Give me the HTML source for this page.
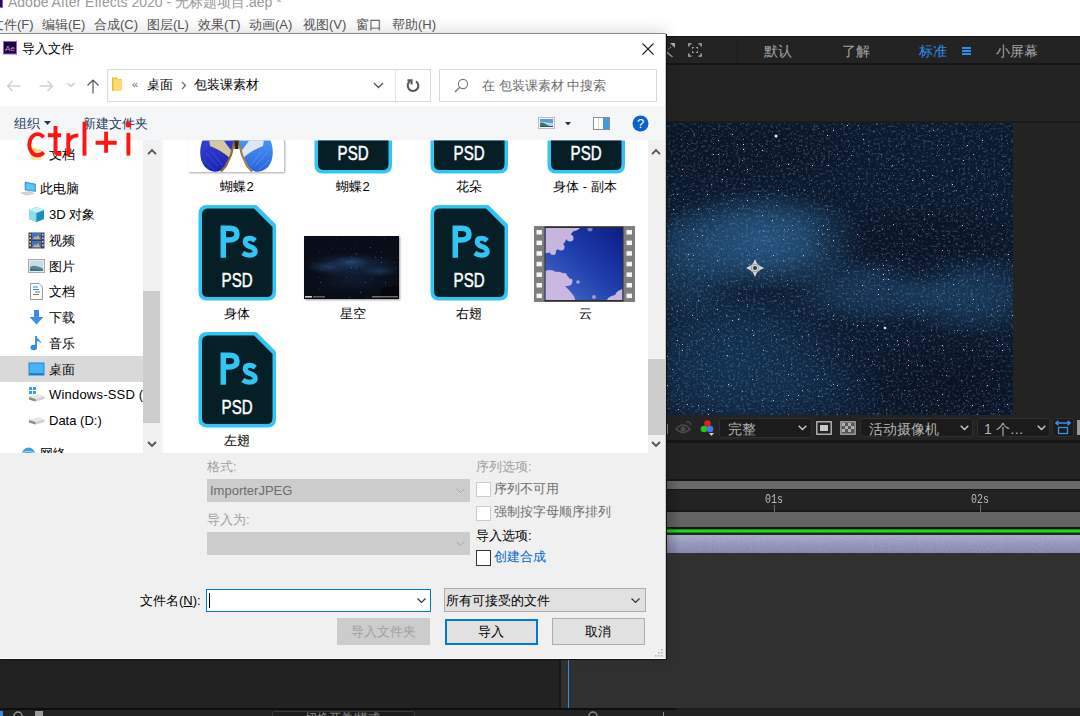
<!DOCTYPE html>
<html><head><meta charset="utf-8">
<style>
*{margin:0;padding:0;box-sizing:border-box}
html,body{width:1080px;height:716px;overflow:hidden;background:#fff;font-family:"Liberation Sans",sans-serif}
.a{position:absolute}
.t{position:absolute;white-space:nowrap;line-height:1}
</style></head><body>
<!-- ===== AE window background ===== -->
<div class="a" style="left:0;top:0;width:1080px;height:36px;background:#fff"></div>
<div class="a" style="left:0;top:0;width:3px;height:8px;background:#2a0a50;border-right:1px solid #8a5ad8;border-bottom:1px solid #8a5ad8"></div>
<div class="t" style="left:8px;top:-5px;font-size:14px;color:#9a9a9a">Adobe After Effects 2020 - 无标题项目.aep *</div>
<div class="t" style="left:-9px;top:18px;font-size:13px;color:#555;word-spacing:0">文件(F)</div>
<div class="t" style="left:42px;top:18px;font-size:13px;color:#555">编辑(E)</div>
<div class="t" style="left:94px;top:18px;font-size:13px;color:#555">合成(C)</div>
<div class="t" style="left:147px;top:18px;font-size:13px;color:#555">图层(L)</div>
<div class="t" style="left:198px;top:18px;font-size:13px;color:#555">效果(T)</div>
<div class="t" style="left:249px;top:18px;font-size:13px;color:#555">动画(A)</div>
<div class="t" style="left:303px;top:18px;font-size:13px;color:#555">视图(V)</div>
<div class="t" style="left:356px;top:18px;font-size:13px;color:#555">窗口</div>
<div class="t" style="left:392px;top:18px;font-size:13px;color:#555">帮助(H)</div>

<!-- AE dark area right -->
<div class="a" style="left:600px;top:36px;width:480px;height:680px;background:#232323"></div>
<!-- toolbar -->
<div class="a" style="left:600px;top:63px;width:480px;height:2px;background:#151515"></div>
<div class="a" style="left:600px;top:36px;width:480px;height:1px;background:#161616"></div>
<div class="a" style="left:737px;top:36px;width:1px;height:27px;background:#1b1b1b"></div>
<div class="t" style="left:764px;top:44px;font-size:14px;color:#a3a3a3">默认</div>
<div class="t" style="left:842px;top:44px;font-size:14px;color:#a3a3a3">了解</div>
<div class="t" style="left:918.5px;top:44px;font-size:14px;color:#2f8ee8">标准</div>
<div class="t" style="left:996px;top:44px;font-size:14px;color:#a3a3a3">小屏幕</div>
<div class="a" style="left:962px;top:47px;width:9px;height:1.6px;background:#2f8ee8;box-shadow:0 3px 0 #2f8ee8,0 6px 0 #2f8ee8"></div>
<div class="a" style="left:600px;top:121px;width:480px;height:2px;background:#1a1a1a"></div>

<!-- starfield placeholder -->
<!--STARS--><svg class="a" style="left:666px;top:123px" width="347" height="292" viewBox="0 0 347 292">
<defs>

<filter id="st" x="0" y="0" width="100%" height="100%">
 <feTurbulence type="fractalNoise" baseFrequency="0.8" numOctaves="1" seed="3"/>
 <feColorMatrix type="matrix" values="0 0 0 0 0.55  0 0 0 0 0.62  0 0 0 0 0.9  13 0 0 0 -9.3"/><feGaussianBlur stdDeviation="0.45"/>
</filter>
<filter id="st2" x="0" y="0" width="100%" height="100%">
 <feTurbulence type="fractalNoise" baseFrequency="0.4" numOctaves="2" seed="11"/>
 <feColorMatrix type="matrix" values="0 0 0 0 0.2  0 0 0 0 0.36  0 0 0 0 0.56  3.6 0 0 0 -1.85"/>
</filter>
</defs>
<rect width="347" height="292" fill="#0c1a2e"/>
<defs><radialGradient id="rg0"><stop offset="0" stop-color="#2b6292" stop-opacity="0.8"/><stop offset=".45" stop-color="#2b6292" stop-opacity="0.60"/><stop offset="1" stop-color="#2b6292" stop-opacity="0"/></radialGradient><radialGradient id="rg1"><stop offset="0" stop-color="#1f4c74" stop-opacity="0.6"/><stop offset=".45" stop-color="#1f4c74" stop-opacity="0.45"/><stop offset="1" stop-color="#1f4c74" stop-opacity="0"/></radialGradient><radialGradient id="rg2"><stop offset="0" stop-color="#22507c" stop-opacity="0.5"/><stop offset=".45" stop-color="#22507c" stop-opacity="0.38"/><stop offset="1" stop-color="#22507c" stop-opacity="0"/></radialGradient><radialGradient id="rg3"><stop offset="0" stop-color="#22507c" stop-opacity="0.55"/><stop offset=".45" stop-color="#22507c" stop-opacity="0.41"/><stop offset="1" stop-color="#22507c" stop-opacity="0"/></radialGradient><radialGradient id="rg4"><stop offset="0" stop-color="#17416a" stop-opacity="0.6"/><stop offset=".45" stop-color="#17416a" stop-opacity="0.45"/><stop offset="1" stop-color="#17416a" stop-opacity="0"/></radialGradient><radialGradient id="rg5"><stop offset="0" stop-color="#133456" stop-opacity="0.35"/><stop offset=".45" stop-color="#133456" stop-opacity="0.26"/><stop offset="1" stop-color="#133456" stop-opacity="0"/></radialGradient><radialGradient id="rg6"><stop offset="0" stop-color="#070f1c" stop-opacity="0.6"/><stop offset=".45" stop-color="#070f1c" stop-opacity="0.45"/><stop offset="1" stop-color="#070f1c" stop-opacity="0"/></radialGradient><radialGradient id="rg7"><stop offset="0" stop-color="#08121f" stop-opacity="0.5"/><stop offset=".45" stop-color="#08121f" stop-opacity="0.38"/><stop offset="1" stop-color="#08121f" stop-opacity="0"/></radialGradient><radialGradient id="rg8"><stop offset="0" stop-color="#070e1a" stop-opacity="0.6"/><stop offset=".45" stop-color="#070e1a" stop-opacity="0.45"/><stop offset="1" stop-color="#070e1a" stop-opacity="0"/></radialGradient><radialGradient id="rg9"><stop offset="0" stop-color="#08111e" stop-opacity="0.45"/><stop offset=".45" stop-color="#08111e" stop-opacity="0.34"/><stop offset="1" stop-color="#08111e" stop-opacity="0"/></radialGradient></defs><g><ellipse cx="96" cy="118" rx="105" ry="52" fill="url(#rg0)"/><ellipse cx="20" cy="140" rx="65" ry="58" fill="url(#rg1)"/><ellipse cx="205" cy="168" rx="90" ry="36" fill="url(#rg2)"/><ellipse cx="305" cy="172" rx="80" ry="42" fill="url(#rg3)"/><ellipse cx="70" cy="240" rx="120" ry="85" fill="url(#rg4)"/><ellipse cx="150" cy="270" rx="70" ry="40" fill="url(#rg5)"/><ellipse cx="255" cy="115" rx="120" ry="36" fill="url(#rg6)"/><ellipse cx="60" cy="25" rx="160" ry="50" fill="url(#rg7)"/><ellipse cx="290" cy="260" rx="110" ry="55" fill="url(#rg8)"/><ellipse cx="255" cy="150" rx="45" ry="14" fill="url(#rg9)"/></g>
<rect width="347" height="292" filter="url(#st2)" opacity=".3"/>
<rect width="347" height="292" filter="url(#st)"/>
<circle cx="110" cy="13" r="1.5" fill="#e8ecff"/><circle cx="219" cy="205" r="1.3" fill="#e0e8ff"/>
</svg><!--/STARS-->

<!-- viewer toolbar -->
<div class="a" style="left:600px;top:440px;width:480px;height:3px;background:#161616"></div>

<!-- timeline -->
<div class="a" style="left:600px;top:479px;width:480px;height:2px;background:#171717"></div>
<div class="a" style="left:600px;top:481px;width:480px;height:8px;background:#6a6a6a"></div>
<div class="a" style="left:600px;top:489px;width:480px;height:1px;background:#171717"></div>
<div class="a" style="left:600px;top:510px;width:480px;height:2px;background:#171717"></div>
<div class="a" style="left:600px;top:512px;width:480px;height:16px;background:#636363"></div>
<div class="a" style="left:600px;top:527px;width:480px;height:2px;background:#171717"></div>
<div class="a" style="left:600px;top:529px;width:480px;height:4px;background:linear-gradient(#0b6a0b,#1ed81e 30%,#1ed81e 70%,#0a5a0a)"></div>
<div class="a" style="left:600px;top:533px;width:480px;height:2px;background:#262626"></div>
<div class="a" style="left:600px;top:535px;width:480px;height:18px;background:linear-gradient(#a9a9cb,#9595bb 50%,#8686ac)"></div>
<svg class="a" style="left:666px;top:535px" width="414" height="18" viewBox="0 0 414 18"><defs><filter id="lvn" x="0" y="0" width="100%" height="100%"><feTurbulence type="fractalNoise" baseFrequency="0.9" numOctaves="1" seed="5"/><feColorMatrix type="matrix" values="0 0 0 0 1  0 0 0 0 1  0 0 0 0 1  0 0 0 1.2 -0.55"/></filter></defs><rect width="414" height="18" filter="url(#lvn)" opacity=".35"/></svg>
<div class="a" style="left:666px;top:481px;width:14px;height:72px;background:linear-gradient(90deg,rgba(0,0,0,.18),rgba(0,0,0,0))"></div>
<div class="a" style="left:561px;top:553px;width:519px;height:155px;background:#303030"></div>

<!-- below dialog -->
<div class="a" style="left:0;top:640px;width:559px;height:68px;background:#222"></div>
<div class="a" style="left:559px;top:640px;width:2px;height:68px;background:#171717"></div>
<div class="a" style="left:561px;top:640px;width:519px;height:68px;background:#303030"></div>
<div class="a" style="left:568px;top:640px;width:1px;height:69px;background:#3090e8"></div>
<div class="a" style="left:0;top:709px;width:1080px;height:7px;background:#222"></div>
<div class="a" style="left:0;top:708px;width:676px;height:2px;background:#0e0e0e"></div>
<div class="a" style="left:676px;top:708px;width:404px;height:2px;background:#1c1c1c"></div>



<!-- AE toolbar icons -->
<svg class="a" style="left:666px;top:42px" width="12" height="16" viewBox="0 0 12 16"><path d="M0 9.6L6.5 15.1" stroke="#9a9a9a" stroke-width="1.3"/><path d="M9 1V6L4 1Z" fill="#b0b0b0"/><path d="M5 4.8L2 7.6" stroke="#a0a0a0" stroke-width="1.1" stroke-dasharray="1.2 1"/></svg>
<svg class="a" style="left:687.5px;top:43px" width="14" height="14" viewBox="0 0 14 14"><path d="M0.9 3.5V0.9H3.5M10.5 0.9H13.1V3.5M13.1 10.5V13.1H10.5M3.5 13.1H0.9V10.5" stroke="#b4b4b4" stroke-width="1.4" fill="none"/><g fill="#b0b0b0"><path d="M4 4H6.2L4 6.2Z"/><path d="M10 4V6.2L7.8 4Z"/><path d="M4 10V7.8L6.2 10Z"/><path d="M10 10H7.8L10 7.8Z"/></g></svg>
<!-- anchor point -->
<svg class="a" style="left:745px;top:258px" width="20" height="20" viewBox="0 0 20 20"><path d="M10 1L12 5.5Q14.5 7.5 15 8L19 10L15 12Q14.5 12.5 12 14.5L10 19L8 14.5Q5.5 12.5 5 12L1 10L5 8Q5.5 7.5 8 5.5Z" fill="#d8d8d8"/><circle cx="10" cy="10" r="3.8" fill="#d8d8d8" stroke="#9a9a9a" stroke-width="1"/><circle cx="10" cy="10" r="2" fill="#2a3a50"/></svg>
<!-- viewer toolbar -->
<div class="a" style="left:666px;top:424px;width:2px;height:10px;background:#7a7a7a"></div>
<svg class="a" style="left:675px;top:420px" width="18" height="16" viewBox="0 0 18 16"><path d="M1 9Q8 1 15 9Q8 16 1 9Z" stroke="#4a4a4a" stroke-width="1.6" fill="none"/><circle cx="8" cy="9" r="2.5" fill="#4a4a4a"/><path d="M11 2Q15 1 16 5" stroke="#4a4a4a" stroke-width="1.4" fill="none"/></svg>
<svg class="a" style="left:700px;top:418.5px" width="15" height="18" viewBox="0 0 15 18"><circle cx="7.5" cy="4.5" r="3.3" fill="#e81c1c"/><circle cx="4" cy="10" r="3.3" fill="#1fc81f"/><circle cx="10" cy="10" r="3.3" fill="#3d7bf0"/><path d="M9 14H14L11.5 17Z" fill="#d0d0d0"/></svg>
<div class="a" style="left:719px;top:418px;width:93px;height:20px;background:#1b1b1b;border:1px solid #2f2f2f;border-radius:3px"></div>
<div class="t" style="left:728px;top:422px;font-size:14.2px;color:#b4b4b4">完整</div>
<svg class="a" style="left:798px;top:425px" width="9" height="6" viewBox="0 0 9 6"><path d="M0.7 0.7L4.5 4.5L8.3 0.7" stroke="#c8c8c8" stroke-width="1.4" fill="none"/></svg>
<svg class="a" style="left:816px;top:421px" width="16" height="14" viewBox="0 0 16 14"><rect x="0.8" y="0.8" width="14.4" height="12.4" stroke="#b8b8b8" stroke-width="1.4" fill="none"/><rect x="4" y="4" width="8" height="6" fill="#c8c8c8"/></svg>
<svg class="a" style="left:840px;top:421px" width="16" height="14" viewBox="0 0 16 14"><rect x="0.8" y="0.8" width="14.4" height="12.4" stroke="#a0a0a0" stroke-width="1.4" fill="#555"/><g fill="#b0b0b0"><rect x="2" y="2" width="3" height="3"/><rect x="8" y="2" width="3" height="3"/><rect x="5" y="5" width="3" height="3"/><rect x="11" y="5" width="3" height="3"/><rect x="2" y="8" width="3" height="3"/><rect x="8" y="8" width="3" height="3"/></g></svg>
<div class="a" style="left:860px;top:418px;width:113px;height:19px;background:#1b1b1b;border:1px solid #2f2f2f;border-radius:3px"></div>
<div class="t" style="left:868.5px;top:422px;font-size:14.2px;color:#b4b4b4">活动摄像机</div>
<svg class="a" style="left:960px;top:425px" width="9" height="6" viewBox="0 0 9 6"><path d="M0.7 0.7L4.5 4.5L8.3 0.7" stroke="#c8c8c8" stroke-width="1.4" fill="none"/></svg>
<div class="a" style="left:977px;top:418px;width:73px;height:19px;background:#1b1b1b;border:1px solid #2f2f2f;border-radius:3px"></div>
<div class="t" style="left:984px;top:422px;font-size:14px;color:#b4b4b4">1 个…</div>
<svg class="a" style="left:1037px;top:425px" width="9" height="6" viewBox="0 0 9 6"><path d="M0.7 0.7L4.5 4.5L8.3 0.7" stroke="#c8c8c8" stroke-width="1.4" fill="none"/></svg>
<div class="a" style="left:1052px;top:418px;width:22px;height:19px;background:#1b1b1b;border:1px solid #2f2f2f;border-radius:3px"></div>
<svg class="a" style="left:1054px;top:420px" width="18" height="15" viewBox="0 0 18 15"><path d="M1.5 3H16.5M1.5 3L4.5 0.8M1.5 3L4.5 5.2M16.5 3L13.5 0.8M16.5 3L13.5 5.2" stroke="#3a94ea" stroke-width="1.3" fill="none"/><rect x="4.5" y="7.5" width="9" height="6" stroke="#3a94ea" stroke-width="1.3" fill="none"/></svg>
<div class="a" style="left:1077px;top:420px;width:3px;height:15px;background:#9a9a9a"></div>
<!-- timeline text -->
<div class="t" style="left:765px;top:494px;font-size:10px;color:#bdbdbd;font-family:'Liberation Mono',monospace;transform:scaleY(1.3);transform-origin:0 0">01s</div>
<div class="a" style="left:774px;top:505px;width:1px;height:8px;background:#6e6e6e"></div>
<div class="t" style="left:971px;top:494px;font-size:10px;color:#bdbdbd;font-family:'Liberation Mono',monospace;transform:scaleY(1.3);transform-origin:0 0">02s</div>
<div class="a" style="left:980px;top:505px;width:1px;height:8px;background:#6e6e6e"></div>
<!-- bottom bar -->
<svg class="a" style="left:0;top:711px" width="5" height="5" viewBox="0 0 5 5"><rect x="0" y="0" width="3" height="5" fill="#2f8ee8"/></svg>
<svg class="a" style="left:13px;top:711px" width="10" height="5" viewBox="0 0 10 5"><path d="M1 5A4 4 0 0 1 9 5" stroke="#9a9a9a" stroke-width="1.4" fill="none"/></svg>
<div class="a" style="left:35px;top:711px;width:8px;height:5px;background:#9a9a9a"></div>
<div class="a" style="left:272px;top:711px;width:143px;height:6px;border:1px solid #3a3a3a;border-bottom:none;border-radius:3px 3px 0 0;background:#1d1d1d"></div>
<div class="t" style="left:305px;top:712px;font-size:12px;color:#8a8a8a">切换开关/模式</div>
<svg class="a" style="left:588px;top:711px" width="10" height="5" viewBox="0 0 10 5"><path d="M1 5A4 4 0 0 1 9 5" stroke="#8a8a8a" stroke-width="1.4" fill="none"/></svg>
<div class="a" style="left:663px;top:712px;width:1px;height:4px;background:#8a8a8a"></div>

<!-- ===== Dialog ===== -->
<div class="a" id="dlg" style="left:-1px;top:33px;width:667px;height:626px;background:#f0f0f0;border-top:1px solid #8a8a8a;border-right:1px solid #c8c8c8;border-bottom:1px solid #fcfcfc;box-shadow:1px 1px 0 #121212,0 -3px 14px rgba(0,0,0,.13)"></div>
<!-- title bar + address row -->
<div class="a" style="left:0;top:34px;width:665px;height:72px;background:#fff"></div>
<svg class="a" style="left:3px;top:41px" width="14" height="13.5" viewBox="0 0 14 13.5"><rect x="0.5" y="0.5" width="13" height="12.5" fill="#1c0534" stroke="#9a5cf0" stroke-width="1"/><text x="7" y="10.2" text-anchor="middle" font-family="Liberation Sans" font-size="8" fill="#c785ff" textLength="10" lengthAdjust="spacingAndGlyphs">Ae</text></svg>
<div class="t" style="left:22px;top:42px;font-size:13px;color:#000">导入文件</div>
<svg class="a" style="left:642px;top:43px" width="12" height="12" viewBox="0 0 12 12"><path d="M0.5 0.5L11.5 11.5M11.5 0.5L0.5 11.5" stroke="#222" stroke-width="1.1"/></svg>
<!-- nav arrows -->
<svg class="a" style="left:6px;top:78px" width="16" height="16" viewBox="0 0 16 16"><path d="M1.5 8H14.5M1.5 8L6.5 3M1.5 8L6.5 13" stroke="#d2d2d2" stroke-width="1.7" fill="none"/></svg>
<svg class="a" style="left:38px;top:78px" width="16" height="16" viewBox="0 0 16 16"><path d="M1.5 8H14.5M14.5 8L9.5 3M14.5 8L9.5 13" stroke="#d2d2d2" stroke-width="1.7" fill="none"/></svg>
<svg class="a" style="left:67px;top:82px" width="8" height="6" viewBox="0 0 8 6"><path d="M0.5 1L4 4.5L7.5 1" stroke="#c4c4c4" stroke-width="1.1" fill="none"/></svg>
<svg class="a" style="left:86px;top:79px" width="14" height="15" viewBox="0 0 14 15"><path d="M7 1V14.5M7 1L1.5 6.5M7 1L12.5 6.5" stroke="#5a5a5a" stroke-width="1.2" fill="none"/></svg>
<!-- address box -->
<div class="a" style="left:107px;top:69px;width:324px;height:33px;border:1px solid #d9d9d9;background:#fff"></div>
<div class="a" style="left:395px;top:70px;width:1px;height:31px;background:#e5e5e5"></div>
<svg class="a" style="left:111px;top:77px" width="12" height="15" viewBox="0 0 12 15"><path d="M1 0.5H6L7 2H10.5V13H2.5L1 14.5Z" fill="#e8b943"/><path d="M2.5 1.5L10.5 3V13.5L2.5 14.5Z" fill="#ffd96e"/></svg>
<div class="t" style="left:132px;top:79px;font-size:11px;color:#6d6d6d">«</div>
<div class="t" style="left:147px;top:78px;font-size:13px;color:#000">桌面</div>
<svg class="a" style="left:181px;top:81px" width="6" height="9" viewBox="0 0 6 9"><path d="M1 1L4.5 4.5L1 8" stroke="#6d6d6d" stroke-width="1.3" fill="none"/></svg>
<div class="t" style="left:194px;top:78px;font-size:13px;color:#000">包装课素材</div>
<svg class="a" style="left:373px;top:82px" width="11" height="7" viewBox="0 0 11 7"><path d="M1 1L5.5 5.5L10 1" stroke="#555" stroke-width="1.4" fill="none"/></svg>
<svg class="a" style="left:405px;top:78px" width="16" height="16" viewBox="0 0 16 16"><path d="M11 3.3A5.3 5.3 0 1 1 5.2 3.2" stroke="#5a5a5a" stroke-width="2.1" fill="none"/><path d="M2.5 2.2H6.6V6.4" stroke="#5a5a5a" stroke-width="2" fill="none"/></svg>
<!-- search -->
<div class="a" style="left:439px;top:69px;width:218px;height:33px;border:1px solid #d9d9d9;background:#fff"></div>
<svg class="a" style="left:454px;top:78px" width="15" height="15" viewBox="0 0 15 15"><circle cx="9" cy="6" r="4.6" stroke="#777" stroke-width="1.1" fill="none"/><path d="M5.7 9.3L1 14" stroke="#777" stroke-width="1.3"/></svg>
<div class="t" style="left:482px;top:79px;font-size:13px;color:#6d6d6d">在 包装课素材 中搜索</div>
<!-- command bar -->
<div class="a" style="left:0;top:106px;width:665px;height:34px;background:#f5f6f7"></div>
<div class="t" style="left:14px;top:117px;font-size:13px;color:#1e3a5c">组织</div>
<svg class="a" style="left:44px;top:121px" width="7" height="4" viewBox="0 0 7 4"><path d="M0 0H7L3.5 4Z" fill="#1e3a5c"/></svg>
<div class="t" style="left:83px;top:117px;font-size:13px;color:#1e3a5c">新建文件夹</div>
<svg class="a" style="left:538px;top:117px" width="17" height="12" viewBox="0 0 17 12"><rect x="0.5" y="0.5" width="16" height="11" fill="#f4f4f4" stroke="#bdbdbd"/><rect x="2" y="2" width="13" height="8" fill="#5a9ad8"/><path d="M2 5C5 4 9 6 15 6V10H2Z" fill="#b8d4e8"/><path d="M2 6C4 5 7 6 9 8C11 9 13 9 15 9V10H2Z" fill="#3f7a5a"/><rect x="2" y="9" width="13" height="1" fill="#1f4f88"/></svg>
<svg class="a" style="left:565px;top:121.5px" width="6" height="3.5" viewBox="0 0 6 3.5"><path d="M0 0H6L3 3.5Z" fill="#1e3050"/></svg>
<svg class="a" style="left:593px;top:117px" width="17" height="13" viewBox="0 0 17 13"><rect x="0.5" y="0.5" width="16" height="12" fill="#fff" stroke="#8c8c8c"/><rect x="10" y="1" width="6" height="11" fill="#4598e0"/><rect x="5" y="1" width="1" height="11" fill="#d8d8d8"/></svg>
<svg class="a" style="left:632px;top:115px" width="17" height="17" viewBox="0 0 17 17"><circle cx="8.5" cy="8.5" r="8" fill="#0d62c9"/><text x="8.5" y="13.2" text-anchor="middle" font-family="Liberation Sans" font-size="13" fill="#fff">?</text></svg>

<!-- nav pane -->
<div class="a" style="left:0;top:140px;width:143px;height:313px;background:#fff"></div>
<div class="a" style="left:143px;top:140px;width:18px;height:313px;background:#f0f0f0"></div>
<div class="a" style="left:143px;top:291px;width:17px;height:132px;background:#cdcdcd"></div>
<svg class="a" style="left:147px;top:148px" width="10" height="7" viewBox="0 0 10 7"><path d="M1 6.2L5 2.2L9 6.2" stroke="#555" stroke-width="1.9" fill="none"/></svg>
<svg class="a" style="left:147px;top:441px" width="10" height="7" viewBox="0 0 10 7"><path d="M1 1L5 5L9 1" stroke="#555" stroke-width="1.9" fill="none"/></svg>
<div class="a" style="left:161px;top:140px;width:3px;height:313px;background:#f8f8f8"></div>
<div class="a" style="left:0;top:356px;width:143px;height:26px;background:#d9d9d9"></div>
<div class="a" style="left:0;top:0;width:143px;height:453px;clip-path:inset(140px 0 0 0)">
<!-- 文档 (partially hidden, under ctrl+i) -->
<svg class="a" style="left:30px;top:147px" width="12" height="14" viewBox="0 0 12 14"><path d="M1 1H5L6.5 2.5H11V13H1Z" fill="#f3cf6a"/><path d="M1 4H11V13H1Z" fill="#ffe39a"/></svg>
<div class="t" style="left:49px;top:148px;font-size:13px;color:#000">文档</div>
<!-- 此电脑 -->
<svg class="a" style="left:20px;top:181px" width="17" height="15" viewBox="0 0 17 15"><path d="M5 1L15.5 3V10.5L5 9Z" fill="#3aa8e8" stroke="#2a86c8" stroke-width="0.6"/><path d="M6 2.2L14.6 3.9V9.6L6 8.2Z" fill="#5fc3f5"/><path d="M1 12L9 10.5L14 12.5L6 14Z" fill="#d8d8d8" stroke="#b0b0b0" stroke-width="0.5"/></svg>
<div class="t" style="left:40px;top:182px;font-size:13px;color:#000">此电脑</div>
<!-- 3D 对象 -->
<svg class="a" style="left:28px;top:206px" width="17" height="17" viewBox="0 0 17 17"><path d="M8.5 1L16 4V13L8.5 16L1 13V4Z" fill="#2bb3d9"/><path d="M1 4L8.5 7V16L1 13Z" fill="#8fdcf0"/><path d="M8.5 7L16 4V13L8.5 16Z" fill="#1c8fb8"/><path d="M1 4L8.5 1L16 4L8.5 7Z" fill="#c7f0fb"/></svg>
<div class="t" style="left:49px;top:208px;font-size:13px;color:#000">3D 对象</div>
<!-- 视频 -->
<svg class="a" style="left:28px;top:232px" width="17" height="17" viewBox="0 0 17 17"><rect x="0.5" y="0.5" width="16" height="16" fill="#444"/><rect x="4" y="1" width="9" height="7" fill="#3d6fd6"/><rect x="4" y="9" width="9" height="7" fill="#3d6fd6"/><path d="M5 7L7 4L8 6L10 3L12 7Z" fill="#e9b93a"/><path d="M5 15L7 12L8 14L10 11L12 15Z" fill="#e9b93a"/><g fill="#ddd"><rect x="1.5" y="2" width="1.5" height="1.5"/><rect x="1.5" y="5.5" width="1.5" height="1.5"/><rect x="1.5" y="9" width="1.5" height="1.5"/><rect x="1.5" y="12.5" width="1.5" height="1.5"/><rect x="14" y="2" width="1.5" height="1.5"/><rect x="14" y="5.5" width="1.5" height="1.5"/><rect x="14" y="9" width="1.5" height="1.5"/><rect x="14" y="12.5" width="1.5" height="1.5"/></g></svg>
<div class="t" style="left:49px;top:234px;font-size:13px;color:#000">视频</div>
<!-- 图片 -->
<svg class="a" style="left:28px;top:259px" width="17" height="14" viewBox="0 0 17 14"><rect x="0.5" y="0.5" width="16" height="13" fill="#e8e8e8" stroke="#a8a8a8"/><rect x="2" y="2" width="13" height="10" fill="#c5dcef"/><path d="M2 8C5 6 9 6.5 15 9.5V12H2Z" fill="#5a8c78"/><path d="M2 10C6 9.5 10 10 15 11V12H2Z" fill="#3f6f96"/></svg>
<div class="t" style="left:49px;top:260px;font-size:13px;color:#000">图片</div>
<!-- 文档 -->
<svg class="a" style="left:30px;top:283px" width="13" height="17" viewBox="0 0 13 17"><path d="M0.5 0.5H9L12.5 4V16.5H0.5Z" fill="#fafafa" stroke="#9a9a9a"/><path d="M3 4H8M3 6.5H9M5 9H10" stroke="#3a8ad8" stroke-width="1.2"/><path d="M3 11.5H9" stroke="#777" stroke-width="1"/></svg>
<div class="t" style="left:49px;top:285px;font-size:13px;color:#000">文档</div>
<!-- 下载 -->
<svg class="a" style="left:29px;top:310px" width="15" height="15" viewBox="0 0 15 15"><path d="M5 0H10V7H14.5L7.5 14.5L0.5 7H5Z" fill="#3d8ee0"/></svg>
<div class="t" style="left:49px;top:311px;font-size:13px;color:#000">下载</div>
<!-- 音乐 -->
<svg class="a" style="left:30px;top:335px" width="13" height="16" viewBox="0 0 13 16"><path d="M6 1V12" stroke="#2f8de4" stroke-width="1.8"/><ellipse cx="3.8" cy="12.5" rx="3.3" ry="2.8" fill="#2f8de4"/><path d="M6 1C7 4 11 5 11.5 9C10.5 7 8.5 6 6.5 6Z" fill="#2f8de4"/></svg>
<div class="t" style="left:49px;top:337px;font-size:13px;color:#000">音乐</div>
<!-- 桌面 -->
<svg class="a" style="left:28px;top:362px" width="17" height="14" viewBox="0 0 17 14"><rect x="0.5" y="0.5" width="16" height="13" fill="#1e88d8"/><rect x="1.5" y="1.5" width="14" height="10" fill="#48b2f2"/><rect x="1.5" y="11.5" width="14" height="1" fill="#1a6fb6"/></svg>
<div class="t" style="left:49px;top:363px;font-size:13px;color:#000">桌面</div>
<!-- Windows-SSD -->
<svg class="a" style="left:28px;top:386px" width="17" height="16" viewBox="0 0 17 16"><g fill="#2ea2f0"><rect x="1" y="1" width="3" height="3"/><rect x="5" y="1" width="3" height="3"/><rect x="1" y="5" width="3" height="3"/><rect x="5" y="5" width="3" height="3"/></g><path d="M1 11L10 8.5L16.5 10.5V13L7.5 15.5L1 13.5Z" fill="#cfcfcf"/><path d="M1 11L7.5 13L16.5 10.5L10 8.5Z" fill="#e8e8e8"/><path d="M1 11L7.5 13V15.5L1 13.5Z" fill="#8a8a8a"/><rect x="3" y="12.6" width="2" height="1" fill="#3ad63a"/></svg>
<div class="t" style="left:49px;top:388px;font-size:13px;color:#000;letter-spacing:0.2px">Windows-SSD (C:)</div>
<!-- Data -->
<svg class="a" style="left:28px;top:413px" width="17" height="13" viewBox="0 0 17 13"><path d="M1 7L10 4.5L16.5 6.5V9L7.5 11.5L1 9.5Z" fill="#cfcfcf"/><path d="M1 7L7.5 9L16.5 6.5L10 4.5Z" fill="#e8e8e8"/><path d="M1 7L7.5 9V11.5L1 9.5Z" fill="#8a8a8a"/><rect x="3" y="8.6" width="2" height="1" fill="#3ad63a"/></svg>
<div class="t" style="left:49px;top:414px;font-size:13px;color:#000">Data (D:)</div>
<!-- 网络 (cut) -->
<svg class="a" style="left:20px;top:446px" width="17" height="14" viewBox="0 0 17 14"><circle cx="8.5" cy="8" r="6.5" fill="#3da0e0"/><path d="M3 7C6 5 11 5 14 7" stroke="#bfe3fa" stroke-width="1" fill="none"/></svg>
<div class="t" style="left:40px;top:447px;font-size:13px;color:#000">网络</div>
</div>

<!-- content -->
<svg width="0" height="0" style="position:absolute"><defs>
<g id="psd">
<path d="M9 0H57Q58.5 0 59.5 1L77 18.5Q78 19.5 78 21V87Q78 95.5 69.5 95.5H9Q0.5 95.5 0.5 87V9Q0.5 0 9 0Z" fill="#31c5f3"/>
<path d="M10 3.5H56L74.5 22V86Q74.5 92 68.5 92H10Q4 92 4 86V10Q4 3.5 10 3.5Z" fill="#061e26"/>
<path d="M25.3 52.7V23.2H31.5Q39 23.2 39 29.1Q39 35 31.5 35H25.3" stroke="#31c5f3" stroke-width="5.5" fill="none"/>
<path d="M57.2 35.6Q54.5 33.2 51.5 33.2Q47.2 33.2 47.2 37.1Q47.2 40.1 51.7 41.5Q57.2 43.1 57.2 46.6Q57.2 50.2 51.3 50.2Q47.8 50.2 44.8 47.9" stroke="#31c5f3" stroke-width="5" fill="none"/>
<text x="23.6" y="82.3" font-family="Liberation Sans" font-size="21" fill="#ffffff" stroke="#fff" stroke-width=".5" textLength="31" lengthAdjust="spacingAndGlyphs">PSD</text>
</g>
</defs></svg>
<div class="a" style="left:164px;top:140px;width:484px;height:313px;background:#fff"></div>
<div class="a" style="left:0;top:0;width:648px;height:453px;clip-path:inset(140.5px 0 0 164px)">
<div class="a" style="left:188px;top:108px;width:96px;height:64px;background:#fff;box-shadow:1px 1px 2px rgba(0,0,0,.35)"></div>
<svg class="a" style="left:188px;top:108px" width="96" height="64" viewBox="0 0 96 64">
<defs><linearGradient id="wl" x1="0" y1="0" x2="0.3" y2="1"><stop offset="0" stop-color="#3444d8"/><stop offset="1" stop-color="#1c26b4"/></linearGradient>
<linearGradient id="wr" x1="0" y1="0" x2="0" y2="1"><stop offset="0" stop-color="#4a98f4"/><stop offset="1" stop-color="#2a62dc"/></linearGradient></defs>
<path d="M15 31C11 40 11 52 17 59C22 64 29 65 33.5 62C38 58 42 50 47.5 31Z" fill="url(#wl)"/>
<path d="M82 31C86 40 86 52 80 59C75 64 68 65 63.5 62C59 58 55 50 49.5 31Z" fill="url(#wr)"/>
<path d="M21 31H35C38 36 41 40 45 44L42 50C36 45 30 41 22 38Z" fill="#d6c9a0"/>
<path d="M76 31H62C59 36 56 40 52 44L55 50C61 45 67 41 75 38Z" fill="#dfe6f4"/>
<path d="M47 31L43 47L38 58L33 63.5" stroke="#8e6a3c" stroke-width="2.2" fill="none"/>
<path d="M50 31L54 47L59 58L64 63.5" stroke="#a08050" stroke-width="2.2" fill="none"/>
<path d="M46.5 31H50.5V41H46.5Z" fill="#2e2418"/>
<g stroke="#5a78f0" stroke-width=".6" opacity=".6"><path d="M18 45L30 58M24 44L34 57M16 52L26 62"/></g>
<g stroke="#8ec0ff" stroke-width=".6" opacity=".6"><path d="M79 45L67 58M73 44L63 57M81 52L71 62"/></g>
</svg>
<svg class="a" style="left:314px;top:78px" width="78" height="96" viewBox="0 0 78 96"><use href="#psd"/></svg><svg class="a" style="left:430px;top:78px" width="78" height="96" viewBox="0 0 78 96"><use href="#psd"/></svg><svg class="a" style="left:547px;top:78px" width="78" height="96" viewBox="0 0 78 96"><use href="#psd"/></svg><div class="t" style="left:177px;width:120px;text-align:center;top:180px;font-size:13px;color:#000">蝴蝶2</div><div class="t" style="left:293px;width:120px;text-align:center;top:180px;font-size:13px;color:#000">蝴蝶2</div><div class="t" style="left:409px;width:120px;text-align:center;top:180px;font-size:13px;color:#000">花朵</div><div class="t" style="left:525px;width:120px;text-align:center;top:180px;font-size:13px;color:#000">身体 - 副本</div><svg class="a" style="left:198px;top:205px" width="78" height="96" viewBox="0 0 78 96"><use href="#psd"/></svg><div class="a" style="left:304px;top:236px;width:95px;height:63px;background:#090e18;box-shadow:1px 1px 2px rgba(0,0,0,.4)"></div>
<svg class="a" style="left:304px;top:236px" width="95" height="63" viewBox="0 0 95 63"><defs>
<radialGradient id="tb1"><stop offset="0" stop-color="#2a5a8c" stop-opacity=".9"/><stop offset=".5" stop-color="#1d4068" stop-opacity=".6"/><stop offset="1" stop-color="#1d4068" stop-opacity="0"/></radialGradient>
<radialGradient id="tb2"><stop offset="0" stop-color="#1c3a60" stop-opacity=".7"/><stop offset="1" stop-color="#1c3a60" stop-opacity="0"/></radialGradient></defs>
<rect width="95" height="63" fill="#080d17"/>
<ellipse cx="48" cy="29" rx="50" ry="13" fill="url(#tb2)"/>
<ellipse cx="47" cy="26" rx="20" ry="6" fill="url(#tb1)" opacity=".8"/>
<ellipse cx="24" cy="31" rx="20" ry="6" fill="url(#tb1)" opacity=".55"/>
<ellipse cx="76" cy="35" rx="20" ry="6" fill="url(#tb1)" opacity=".5"/>
<ellipse cx="50" cy="44" rx="45" ry="14" fill="url(#tb2)" opacity=".45"/>
<rect width="95" height="63" filter="url(#st)" opacity=".35"/>
<path d="M76 63L78 53L82 50L86 52L90 48L95 50V63Z" fill="#05070c"/>
<rect x="1" y="60" width="7" height="1.6" fill="#fff" opacity=".8"/><rect x="9" y="60.2" width="12" height="1.2" fill="#fff" opacity=".45"/><rect x="68" y="60.2" width="26" height="1.2" fill="#fff" opacity=".5"/>
</svg>
<svg class="a" style="left:430px;top:205px" width="78" height="96" viewBox="0 0 78 96"><use href="#psd"/></svg><svg class="a" style="left:534px;top:226px" width="101" height="76" viewBox="0 0 101 76">
<defs><linearGradient id="sky" x1="1" y1="0" x2="0" y2="1"><stop offset="0" stop-color="#0b1c84"/><stop offset=".5" stop-color="#1f40ae"/><stop offset="1" stop-color="#4a70cc"/></linearGradient></defs>
<rect x="0" y="0" width="101" height="76" fill="#7e7e7e"/>
<rect x="10.5" y="0.5" width="79" height="75" fill="#2e2e2e"/>
<rect x="11.5" y="2" width="77" height="72" fill="url(#sky)"/>
<clipPath id="skc"><rect x="11.5" y="2" width="77" height="72"/></clipPath><g fill="#d6bfe4" clip-path="url(#skc)" opacity=".93">
<path d="M11.5 2H46C44 4 42 5 40 5C38 6 37 8 36 10C34 12 32 13 31 16C29 19 27 19 25 21C24 24 21 26 18 25C16 27 14 27 11.5 27Z"/>
<circle cx="36" cy="12" r="3.5"/><circle cx="27" cy="21" r="3.5"/><circle cx="19" cy="26" r="3"/><circle cx="56" cy="3" r="2.5" opacity=".6"/>
<path d="M11.5 45C15 43 19 44 22 46C26 45 29 47 30 49C33 49 36 51 35 54C38 55 39 57 37 59C35 60 33 60 31 60C34 63 37 66 39 69C41 71 41 73 41 74H11.5Z"/>
<circle cx="30" cy="50" r="3"/><circle cx="36" cy="55" r="2.5"/><circle cx="44" cy="56" r="1.8" opacity=".8"/><circle cx="60" cy="71" r="2" opacity=".7"/>
<path d="M73 74C74 71 77 70 81 69C82 66 85 64 88.5 63V74Z"/>
</g>
<g fill="#f4f4f4">
<rect x="2.5" y="4.0" width="5.5" height="4.5"/><rect x="92.5" y="4.0" width="5.5" height="4.5"/><rect x="2.5" y="14.6" width="5.5" height="4.5"/><rect x="92.5" y="14.6" width="5.5" height="4.5"/><rect x="2.5" y="25.2" width="5.5" height="4.5"/><rect x="92.5" y="25.2" width="5.5" height="4.5"/><rect x="2.5" y="35.8" width="5.5" height="4.5"/><rect x="92.5" y="35.8" width="5.5" height="4.5"/><rect x="2.5" y="46.4" width="5.5" height="4.5"/><rect x="92.5" y="46.4" width="5.5" height="4.5"/><rect x="2.5" y="57.0" width="5.5" height="4.5"/><rect x="92.5" y="57.0" width="5.5" height="4.5"/><rect x="2.5" y="67.6" width="5.5" height="4.5"/><rect x="92.5" y="67.6" width="5.5" height="4.5"/></g></svg>
<div class="t" style="left:177px;width:120px;text-align:center;top:307px;font-size:13px;color:#000">身体</div><div class="t" style="left:293px;width:120px;text-align:center;top:307px;font-size:13px;color:#000">星空</div><div class="t" style="left:409px;width:120px;text-align:center;top:307px;font-size:13px;color:#000">右翅</div><div class="t" style="left:525px;width:120px;text-align:center;top:307px;font-size:13px;color:#000">云</div><svg class="a" style="left:198px;top:332px" width="78" height="96" viewBox="0 0 78 96"><use href="#psd"/></svg><div class="t" style="left:177px;width:120px;text-align:center;top:434px;font-size:13px;color:#000">左翅</div></div>

<div class="a" style="left:648px;top:140px;width:17px;height:313px;background:#f0f0f0"></div>
<div class="a" style="left:648px;top:359px;width:17px;height:76px;background:#cdcdcd"></div>
<svg class="a" style="left:651px;top:148px" width="10" height="7" viewBox="0 0 10 7"><path d="M1 6.2L5 2.2L9 6.2" stroke="#555" stroke-width="1.9" fill="none"/></svg>
<svg class="a" style="left:651px;top:441px" width="10" height="7" viewBox="0 0 10 7"><path d="M1 1L5 5L9 1" stroke="#555" stroke-width="1.9" fill="none"/></svg>

<!-- bottom controls -->
<div class="t" style="left:207px;top:460px;font-size:13px;color:#a0a0a0">格式:</div>
<div class="a" style="left:207px;top:479px;width:263px;height:23px;background:#cccccc"></div>
<div class="t" style="left:210px;top:484px;font-size:13px;color:#6d6d6d">ImporterJPEG</div>
<svg class="a" style="left:456px;top:488px" width="9" height="5" viewBox="0 0 9 5"><path d="M0.5 0.5L4.5 4.5L8.5 0.5" stroke="#a8a8a8" stroke-width="1" fill="none"/></svg>
<div class="t" style="left:207px;top:513px;font-size:13px;color:#a0a0a0">导入为:</div>
<div class="a" style="left:207px;top:532px;width:263px;height:23px;background:#cccccc"></div>
<svg class="a" style="left:456px;top:541px" width="9" height="5" viewBox="0 0 9 5"><path d="M0.5 0.5L4.5 4.5L8.5 0.5" stroke="#a8a8a8" stroke-width="1" fill="none"/></svg>
<div class="t" style="left:476px;top:460px;font-size:13px;color:#a0a0a0">序列选项:</div>
<div class="a" style="left:476px;top:482px;width:15px;height:15px;background:#fff;border:1px solid #cccccc"></div>
<div class="t" style="left:494px;top:482px;font-size:13px;color:#6d6d6d">序列不可用</div>
<div class="a" style="left:476px;top:506px;width:15px;height:15px;background:#fff;border:1px solid #cccccc"></div>
<div class="t" style="left:494px;top:505px;font-size:13px;color:#6d6d6d">强制按字母顺序排列</div>
<div class="t" style="left:476px;top:529px;font-size:13px;color:#000">导入选项:</div>
<div class="a" style="left:476px;top:550px;width:15px;height:16px;background:#fff;border:1px solid #333"></div>
<div class="t" style="left:494px;top:550px;font-size:13px;color:#0066cc">创建合成</div>

<div class="t" style="left:140px;top:594px;font-size:13px;color:#000">文件名(<u>N</u>):</div>
<div class="a" style="left:206px;top:589px;width:225px;height:23px;background:#fff;border:1px solid #0078d7"></div>
<div class="a" style="left:209px;top:593px;width:1px;height:15px;background:#000"></div>
<svg class="a" style="left:417px;top:598px" width="9" height="6" viewBox="0 0 9 6"><path d="M0.5 0.5L4.5 4.5L8.5 0.5" stroke="#333" stroke-width="1.2" fill="none"/></svg>
<div class="a" style="left:444px;top:588px;width:202px;height:24px;background:#e1e1e1;border:1px solid #adadad"></div>
<div class="t" style="left:446px;top:594px;font-size:13px;color:#000">所有可接受的文件</div>
<svg class="a" style="left:631px;top:598px" width="9" height="6" viewBox="0 0 9 6"><path d="M0.5 0.5L4.5 4.5L8.5 0.5" stroke="#333" stroke-width="1.2" fill="none"/></svg>
<div class="a" style="left:337px;top:618px;width:93px;height:27px;background:#cccccc"></div>
<div class="t" style="left:351px;top:625px;font-size:13px;color:#a0a0a0">导入文件夹</div>
<div class="a" style="left:445px;top:619px;width:93px;height:26px;background:#e1e1e1;border:2px solid #0078d7"></div>
<div class="t" style="left:478px;top:625px;font-size:13px;color:#000">导入</div>
<div class="a" style="left:552px;top:618px;width:93px;height:27px;background:#e1e1e1;border:1px solid #adadad"></div>
<div class="t" style="left:585px;top:625px;font-size:13px;color:#000">取消</div>
<svg class="a" style="left:655px;top:649px" width="9" height="8" viewBox="0 0 9 8"><g fill="#b8b8b8"><rect x="6" y="0" width="1.6" height="1.6"/><rect x="3" y="3" width="1.6" height="1.6"/><rect x="6" y="3" width="1.6" height="1.6"/><rect x="0" y="6" width="1.6" height="1.6"/><rect x="3" y="6" width="1.6" height="1.6"/><rect x="6" y="6" width="1.6" height="1.6"/></g></svg>

<!-- ctrl+i annotation -->
<svg class="a" style="left:0;top:110px" width="140" height="50" viewBox="0 110 140 50"><g stroke="#ff1414" stroke-width="3.9" fill="none" stroke-linecap="butt">
<path d="M43.6 137.2A8.4 10.6 0 1 0 43.6 152.2"/>
<path d="M55.5 126V150.5Q55.5 154 59 154H61.5M47.8 135.3H61"/>
<path d="M68.3 133.3V156M68.3 141.5Q70.5 135.5 78.3 135.4"/>
<path d="M84.5 121.7V155.6"/>
<path d="M95.6 142.7H116.7M106.1 131.7V152.8"/>
<path d="M128.4 132.8V155.6"/>
</g><circle cx="128.4" cy="124.6" r="2.9" fill="#ff1414"/></svg>
</body></html>
